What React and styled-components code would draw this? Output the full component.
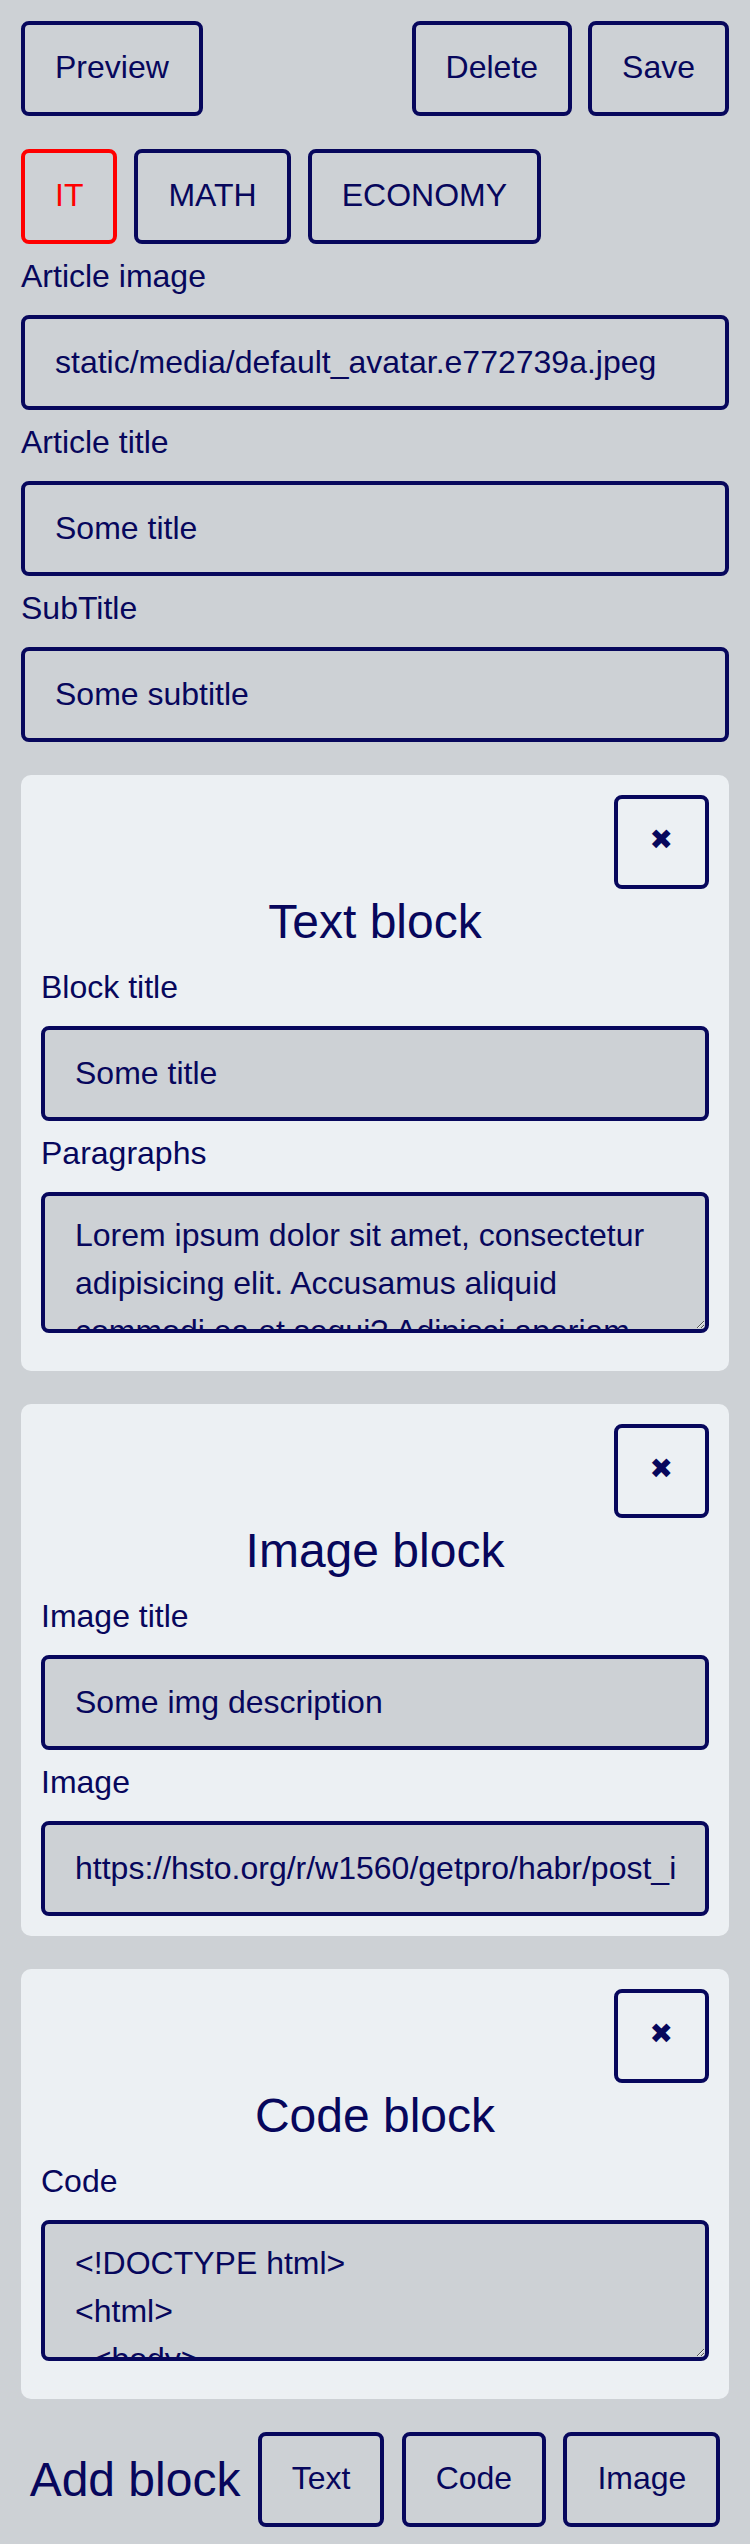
import React from "react";
import styled, { createGlobalStyle } from "styled-components";

const NAVY = "#07075c";
const RED = "#ff0000";
const PAGE_BG = "#cdd1d5";
const CARD_BG = "#ecf0f3";

const GlobalStyle = createGlobalStyle`
  * { box-sizing: border-box; }
  body {
    margin: 0;
    background: ${PAGE_BG};
    color: ${NAVY};
    font-family: "Liberation Sans", Arial, "DejaVu Sans", sans-serif;
    font-size: 32px;
  }
`;

const Page = styled.div`
  display: flex;
  flex-direction: column;
  gap: 33px;
  padding: 21px;
`;

const Toolbar = styled.div`
  display: flex;
  justify-content: space-between;
  align-items: center;
`;

const Group = styled.div`
  display: flex;
  gap: ${(p) => p.$gap || 16}px;
`;

const Button = styled.button`
  font-family: inherit;
  font-size: 32px;
  line-height: normal;
  padding: 24px 30px 26px;
  background: transparent;
  color: ${(p) => (p.$active ? RED : NAVY)};
  border: 4px solid ${(p) => (p.$active ? RED : NAVY)};
  border-radius: 8px;
  cursor: pointer;
`;

const CloseButton = styled(Button)`
  font-family: "DejaVu Sans", sans-serif;
  font-size: 28px;
  line-height: 36px;
  padding: 23px 32px 27px;
`;

const Form = styled.div`
  display: flex;
  flex-direction: column;
`;

const Label = styled.label`
  display: block;
  margin: 14px 0 20px;
  line-height: normal;
`;

const Input = styled.input`
  display: block;
  width: 100%;
  font-family: inherit;
  font-size: 32px;
  line-height: normal;
  padding: 25px 30px;
  color: ${NAVY};
  background: ${PAGE_BG};
  border: 4px solid ${NAVY};
  border-radius: 8px;
  outline: none;
`;

const TextArea = styled.textarea`
  display: block;
  width: 100%;
  height: 141px;
  margin-bottom: 18px;
  font-family: inherit;
  font-size: 32px;
  line-height: 1.5;
  padding: 15px 30px 21px;
  color: ${NAVY};
  background: ${PAGE_BG};
  border: 4px solid ${NAVY};
  border-radius: 8px;
  overflow: hidden;
  outline: none;
`;

const Card = styled.section`
  background: ${CARD_BG};
  border-radius: 10px;
  padding: 20px;
`;

const CardTop = styled.div`
  display: flex;
  justify-content: flex-end;
`;

const CardTitle = styled.h2`
  margin: 5px 0 20px;
  font-size: 48px;
  font-weight: normal;
  line-height: normal;
  text-align: center;
`;

const AddRow = styled.div`
  display: flex;
  align-items: center;
  justify-content: space-around;
`;

const AddTitle = styled.h2`
  margin: 0;
  font-size: 48px;
  font-weight: normal;
  line-height: normal;
`;

const lorem =
  "Lorem ipsum dolor sit amet, consectetur adipisicing elit. Accusamus aliquid commodi ea et sequi? Adipisci aperiam beatae dolorum eius eos, fugiat illum magnam molestias nemo nulla quae quas quisquam sint!";

const code = `<!DOCTYPE html>
<html>
  <body>
    <h1>Hello world</h1>
  </body>
</html>`;

const Field = ({ label, value, area }) => (
  <>
    <Label>{label}</Label>
    {area ? (
      <TextArea defaultValue={value} spellCheck={false} />
    ) : (
      <Input defaultValue={value} spellCheck={false} />
    )}
  </>
);

const Block = ({ title, children }) => (
  <Card>
    <CardTop>
      <CloseButton>✖</CloseButton>
    </CardTop>
    <CardTitle>{title}</CardTitle>
    {children}
  </Card>
);

export default function App() {
  return (
    <>
      <GlobalStyle />
      <Page>
        <Toolbar>
          <Button>Preview</Button>
          <Group $gap={16}>
            <Button>Delete</Button>
            <Button>Save</Button>
          </Group>
        </Toolbar>

        <Form>
          <Group $gap={17}>
            <Button $active>IT</Button>
            <Button>MATH</Button>
            <Button>ECONOMY</Button>
          </Group>
          <Field label="Article image" value="static/media/default_avatar.e772739a.jpeg" />
          <Field label="Article title" value="Some title" />
          <Field label="SubTitle" value="Some subtitle" />
        </Form>

        <Block title="Text block">
          <Field label="Block title" value="Some title" />
          <Field label="Paragraphs" value={lorem} area />
        </Block>

        <Block title="Image block">
          <Field label="Image title" value="Some img description" />
          <Field
            label="Image"
            value="https://hsto.org/r/w1560/getpro/habr/post_images/6a4/2b1/7f3/6a42b17f3c9a.png"
          />
        </Block>

        <Block title="Code block">
          <Field label="Code" value={code} area />
        </Block>

        <AddRow>
          <AddTitle>Add block</AddTitle>
          <Button>Text</Button>
          <Button>Code</Button>
          <Button>Image</Button>
        </AddRow>
      </Page>
    </>
  );
}
